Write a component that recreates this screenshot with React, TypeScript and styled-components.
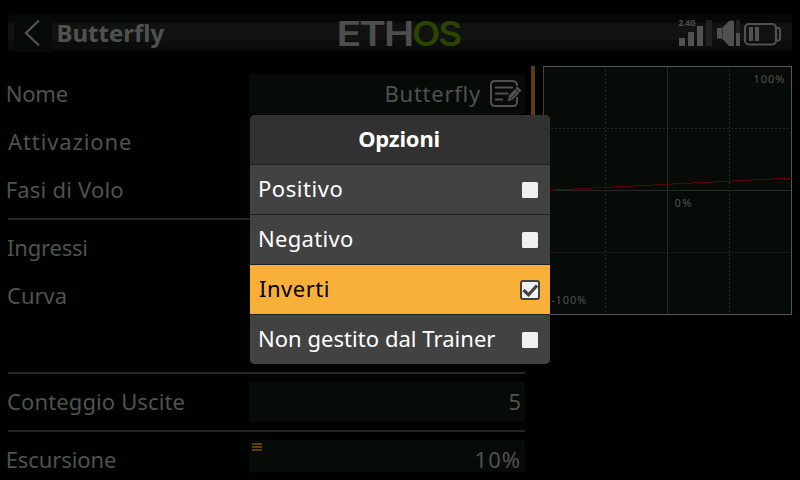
import React from "react";
import styled, { createGlobalStyle } from "styled-components";

const GlobalStyle = createGlobalStyle`
  * { box-sizing: border-box; }
  body { margin: 0; background: #000200; overflow: hidden; }
`;

const ink = "#4f524f";
const panel = "#070b08";
const rule = "#222624";

const Screen = styled.div`
  position: relative;
  width: 800px;
  height: 480px;
  padding-top: 8px;
  overflow: hidden;
  display: flex;
  flex-direction: column;
  background: #000200;
  color: ${ink};
  font-family: "Noto Sans", "Open Sans", sans-serif;
  font-size: 22px;
  line-height: 30px;
  white-space: pre;
`;

const Header = styled.header`
  height: 50px;
  margin: 0 8px;
  flex: none;
  display: grid;
  grid-template-columns: 325px 132px 1fr;
  align-items: center;
  background: linear-gradient(
    #000 0 6px,
    #060807 7px 14px,
    #0d0f0e 15px,
    #111212 18px 32px,
    #0b0d0c 33px 42px,
    #000100 43px
  );
`;

const TitleGroup = styled.div`
  display: flex;
  align-items: center;
  padding-left: 6px;
`;

const BackButton = styled.button`
  width: 38px;
  height: 38px;
  padding: 0;
  border: 0;
  background: #060a07;
  margin-right: 4.5px;
  svg { display: block; }
`;

const Title = styled.h1`
  margin: 0;
  font-size: 24px;
  font-weight: 700;
`;

const Logo = styled.svg`
  display: block;
  font-family: Inter, sans-serif;
  font-size: 34.5px;
  font-weight: 600;
  letter-spacing: -2px;
`;

const Status = styled.svg`
  display: block;
  justify-self: end;
  margin-right: 10px;
  font-family: "Noto Sans", sans-serif;
  font-size: 8px;
  font-weight: 700;
`;

const Body = styled.main`
  display: flex;
  height: 414px;
  padding: 8px 8px 0;
  overflow: hidden;
`;

const Form = styled.div`
  width: 517px;
  padding-top: 4px;
`;

const Row = styled.div`
  display: grid;
  grid-template-columns: 241px 276px;
  align-items: center;
  height: 48px;
`;

const Text = styled.span<{ $tracking?: number; $shift?: number }>`
  display: block;
  padding-bottom: 3px;
  letter-spacing: ${(p) => p.$tracking ?? 0}px;
  margin-left: ${(p) => p.$shift ?? -2.3}px;
`;

const Field = styled.div`
  height: 40px;
  padding-right: 4px;
  display: flex;
  align-items: center;
  justify-content: flex-end;
  background: ${panel};
`;

const MenuMark = styled.svg`
  align-self: flex-start;
  margin: 3px auto 0 3px;
`;

const Divider = styled.hr`
  height: 2px;
  margin: 4px 0;
  border: 0;
  background: ${rule};
`;

const ScrollBar = styled.div`
  width: 4px;
  height: 249px;
  margin: 0 8px 0 6px;
  background: #5f3d0d;
`;

const Chart = styled.svg`
  display: block;
  font-family: "Noto Sans", sans-serif;
  font-size: 11px;
`;

const Dialog = styled.section`
  position: absolute;
  left: 250px;
  top: 115px;
  width: 300px;
  border-radius: 5px;
  overflow: hidden;
  color: #fff;
  background: #424242;
`;

const DialogTitle = styled.h2`
  height: 50px;
  margin: 0;
  padding: 8px 2px 0 0;
  text-align: center;
  font-size: 22px;
  font-weight: 700;
  letter-spacing: -0.2px;
  background: #313131;
  border-bottom: 1px solid #202020;
`;

const Option = styled.div<{ $selected?: boolean }>`
  height: 50px;
  display: flex;
  align-items: center;
  justify-content: space-between;
  padding: 0 9px 0 10px;
  border-bottom: 1px solid #202020;
  color: ${(p) => (p.$selected ? "#000" : "#fff")};
  background: ${(p) => (p.$selected ? "#f9b038" : "#424242")};
  &:last-child { height: 49px; border-bottom: 0; }
`;

const EditGlyph = styled.svg`
  display: block;
  margin-left: 9px;
  margin-right: -1px;
`;

const CheckIcon = ({ checked }: { checked: boolean }) => (
  <svg width="22" height="22" viewBox="0 0 22 22">
    {checked ? (
      <>
        <rect x="2" y="2" width="18" height="18" rx="2" fill="#f0f0f0" stroke="#424242" strokeWidth="2" />
        <path d="M4.500 11 L9.500 15.800 L18 6.500" fill="none" stroke="#424242" strokeWidth="3.200" />
      </>
    ) : (
      <rect x="3" y="3" width="16" height="16" rx="1.500" fill="#f0f0f0" />
    )}
  </svg>
);

const EditIcon = () => (
  <EditGlyph width="32" height="28" viewBox="0 0 32 28" fill="none" stroke={ink} strokeWidth="2">
    <path d="M27 6 V5 Q26.500 1 22.500 1 H5 Q1 1 1 5 V22 Q1 26 5 26 H23 Q27 26 27 22 V17" />
    <path d="M5 7.500H23M5 13.500H18.500M5 19.500H13" />
    <path d="M17.500 21.500 L19 15.500 L27.300 6.500 L31.500 10.500 L23 19.500 Z" fill={ink} stroke="none" />
    <path d="M25 8.500 L29.700 13" stroke={panel} strokeWidth="1" />
    <path d="M20.500 19 L26 13" stroke={panel} strokeWidth="0.700" />
  </EditGlyph>
);

const OPTIONS = [
  { label: "Positivo", tracking: 0.55 },
  { label: "Negativo", tracking: 0.3 },
  { label: "Inverti", tracking: 0.5, selected: true },
  { label: "Non gestito dal Trainer", tracking: 0.04 },
];

export default function App() {
  return (
    <>
      <GlobalStyle />
      <Screen>
        <Header>
          <TitleGroup>
            <BackButton aria-label="Indietro">
              <svg width="38" height="38" viewBox="0 0 38 38">
                <path d="M25 6.500 L12 19 L25 31.500" fill="none" stroke={ink} strokeWidth="2.400" />
              </svg>
            </BackButton>
            <Title>Butterfly</Title>
          </TitleGroup>
          <Logo width="132" height="50" viewBox="-4 0 132 50">
            <text x="-0.500" y="38" textLength="75.500" lengthAdjust="spacingAndGlyphs" fill="#4d4d4d">ETH</text>
            <text x="75" y="38" textLength="48" lengthAdjust="spacingAndGlyphs" fill="#2b4400">OS</text>
          </Logo>
          <Status width="104" height="50" viewBox="678 8 104 50" fill={ink}>
            <text x="678.500" y="26" textLength="17" lengthAdjust="spacingAndGlyphs">2.4G</text>
            <rect x="679" y="38" width="6" height="8" />
            <rect x="688" y="32" width="6" height="14" />
            <rect x="697" y="26" width="6" height="20" />
            <rect x="706" y="20" width="6" height="26" fill="#1d211f" />
            <path d="M717 28 H722 L729 21 Q731 20 734 21 V46 H729 L722 38.500 H717 Z" />
            <path d="M722.500 28.500 V38" stroke="#2c2f2d" strokeWidth="0.800" />
            <rect x="736" y="20" width="4" height="13" fill="#1d211f" />
            <rect x="736" y="33" width="4" height="13" />
            <rect x="745" y="24" width="31" height="20.500" rx="4" fill="none" stroke={ink} strokeWidth="2.200" />
            <rect x="749" y="27" width="4" height="14" />
            <rect x="755" y="27" width="4" height="14" />
            <path d="M777 28 H778.500 Q780 28 780 30 V38.500 Q780 40.500 778.500 40.500 H777" fill="none" stroke={ink} strokeWidth="2" />
          </Status>
        </Header>
        <Body>
          <Form>
            <Row>
              <Text $tracking={-0.2}>Nome</Text>
              <Field>
                <Text $tracking={0.75}>Butterfly</Text>
                <EditIcon />
              </Field>
            </Row>
            <Row><Text $tracking={0.9} $shift={0}>Attivazione</Text><Field /></Row>
            <Row><Text $tracking={0.2}>Fasi di Volo</Text><Field /></Row>
            <Divider />
            <Row><Text $tracking={-0.2} $shift={-1}>Ingressi</Text><Field /></Row>
            <Row><Text $shift={-1}>Curva</Text><Field /></Row>
            <Row><span /><Field /></Row>
            <Divider />
            <Row><Text $tracking={0.12} $shift={-1}>Conteggio Uscite</Text><Field><Text>5</Text></Field></Row>
            <Divider />
            <Row>
              <Text $tracking={-0.1}>Escursione</Text>
              <Field>
                <MenuMark width="10" height="8" viewBox="0 0 10 8">
                  <path d="M0 1H10M0 4H10M0 7H10" stroke="#5f3d0d" strokeWidth="2" />
                </MenuMark>
                <Text $tracking={1}>10%</Text>
              </Field>
            </Row>
          </Form>
          <ScrollBar />
          <Chart width="249" height="249" viewBox="0 0 249 249" fill="none">
            <rect width="249" height="249" fill={panel} />
            <path d="M62.500 0V249M186.500 0V249M0 62.500H249M0 186.500H249" stroke="#252927" strokeDasharray="2 2" />
            <path d="M124.500 0V249M0 124.500H249" stroke="#252927" />
            <rect x="0.500" y="0.500" width="248" height="248" stroke="#555855" />
            <path d="M0.500 1V249" stroke="#5f3d0d" />
            <path
              d="M0 124.500H11V123.500H31V122.500H50V121.500H69V120.500H91V119.500H111V118.500H130V117.500H149V116.500H171V115.500H190V114.500H210V113.500H229V112.500H249"
              stroke="#520606"
            />
            <g fill={ink}>
              <text x="210.500" y="17" textLength="31">100%</text>
              <text x="131.500" y="141" textLength="17">0%</text>
              <text x="8" y="238" textLength="35.500">-100%</text>
            </g>
          </Chart>
        </Body>
        <Dialog>
          <DialogTitle>Opzioni</DialogTitle>
          {OPTIONS.map((o) => (
            <Option key={o.label} $selected={o.selected}>
              <Text $tracking={o.tracking} $shift={o.selected ? -1 : -2}>{o.label}</Text>
              <CheckIcon checked={!!o.selected} />
            </Option>
          ))}
        </Dialog>
      </Screen>
    </>
  );
}
